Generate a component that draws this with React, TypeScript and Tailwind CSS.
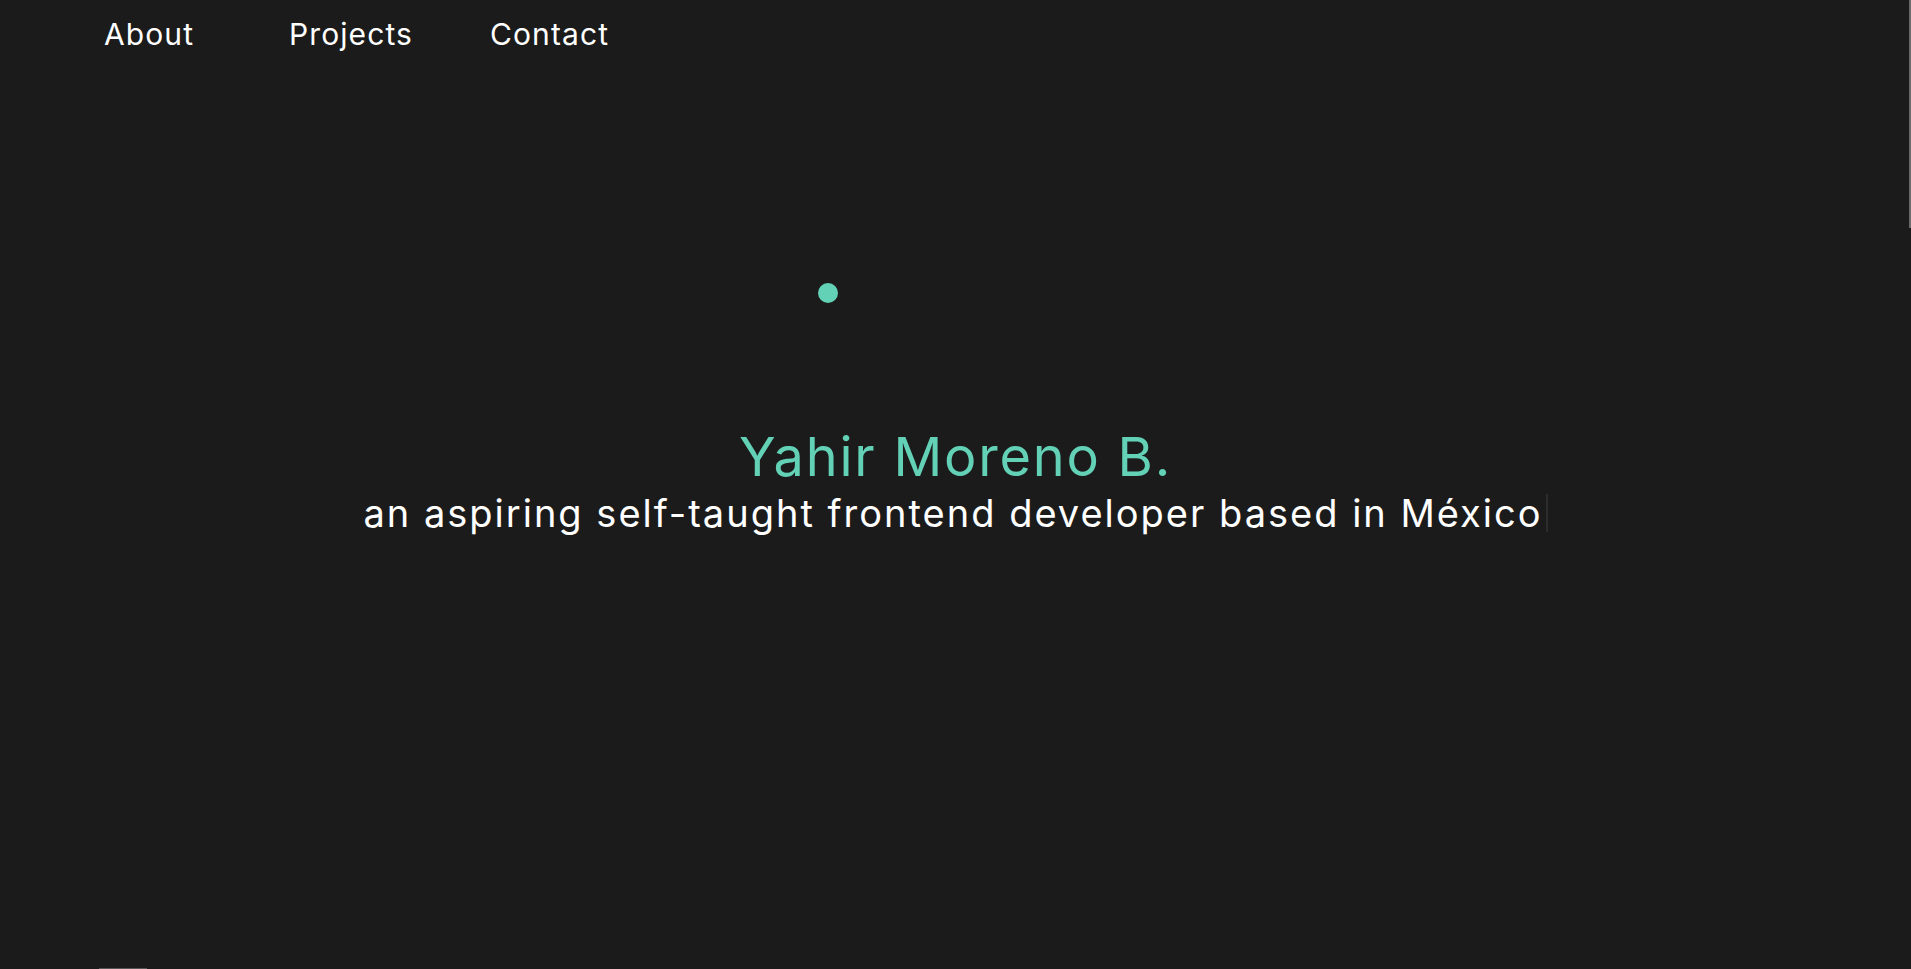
import React from "react";

const font = { fontFamily: "Inter, 'Noto Sans', sans-serif" };

const NavLink = ({ label, width }: { label: string; width: string }) => (
  <li className={width}>
    <a href="#" className="text-[30px] leading-[56px] tracking-[1.1px] text-white">
      {label}
    </a>
  </li>
);

export default function App() {
  return (
    <div className="relative min-h-screen w-full overflow-hidden bg-[#1b1b1b]" style={font}>
      <nav className="h-[60px] pt-[6px]">
        <ul className="flex pl-[104px]">
          <NavLink label="About" width="w-[185px]" />
          <NavLink label="Projects" width="w-[201px]" />
          <NavLink label="Contact" width="w-auto" />
        </ul>
      </nav>

      <section className="flex flex-col items-center">
        <div className="w-full pl-[818px] pt-[223px]">
          <div className="h-5 w-5 rounded-full bg-[#63d1b6]" />
        </div>
        <h1 className="mt-[124px] text-[54px] font-normal leading-[60px] tracking-[1.8px] text-[#63d1b6]">
          Yahir Moreno B.
        </h1>
        <p className="flex items-center text-[38px] leading-[52px] tracking-[2px] text-white">
          an aspiring self-taught frontend developer based in México
          <span className="ml-[3px] inline-block h-[38px] w-[2px] bg-[#2c2c2c]" />
        </p>
      </section>

      <div className="absolute right-0 top-0 h-[228px] w-[2px] bg-[#6a6a6a]" />
      <div className="absolute bottom-0 left-[99px] h-px w-[48px] bg-[#555]" />
    </div>
  );
}
